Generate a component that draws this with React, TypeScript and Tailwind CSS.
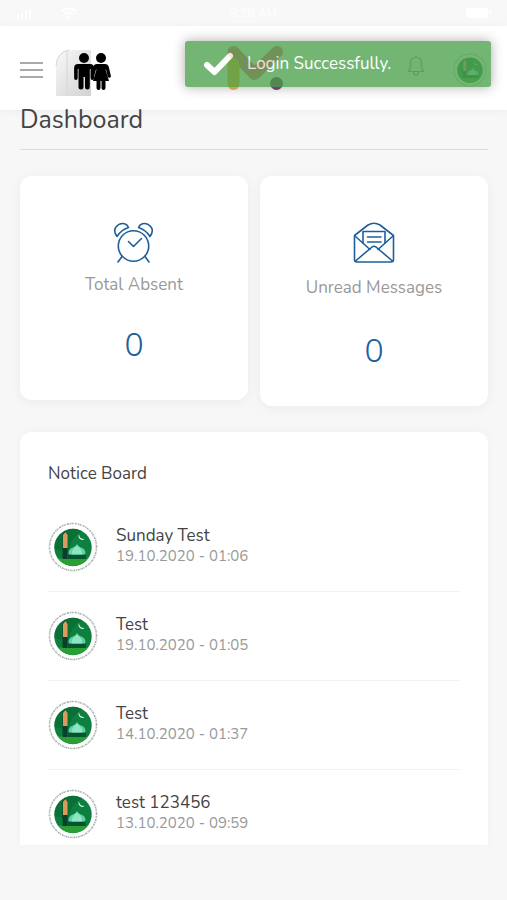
import type { ReactNode } from "react";

const BLUE = "#1f5f99";

const notices = [
  { id: 1, title: "Sunday Test", date: "19.10.2020 - 01:06" },
  { id: 2, title: "Test", date: "19.10.2020 - 01:05" },
  { id: 3, title: "Test", date: "14.10.2020 - 01:37" },
  { id: 4, title: "test 123456", date: "13.10.2020 - 09:59" },
];

function StatusBar() {
  return (
    <div className="grid h-[26px] grid-cols-3 items-center bg-[#f8f8f8] px-4 text-xs text-white">
      <svg width="64" height="14" viewBox="0 0 64 14" fill="none" stroke="#fff" strokeWidth="2" aria-hidden="true">
        <path d="M46 5.5c4-4 10-4 14 0M49 8.500c2.500-2.500 5.500-2.500 8 0" />
        <circle cx="53" cy="11" r="1.500" fill="#fff" stroke="none" />
        <path d="M2 12V9M6 12V7M10 12V5M14 12V3" />
      </svg>
      <span className="justify-self-center">9:28 AM</span>
      <svg width="25" height="10" viewBox="0 0 25 10" fill="#fff" className="justify-self-end" aria-hidden="true">
        <rect width="22" height="10" rx="3" />
        <rect x="23" y="3" width="2" height="4" rx="1" />
      </svg>
    </div>
  );
}

function PeopleLogo() {
  return (
    <svg width="56" height="48" viewBox="0 0 56 48" aria-hidden="true">
      <defs>
        <linearGradient id="page" x1="0" y1="0" x2="1" y2="1">
          <stop offset="0" stopColor="#f8f8f8" />
          <stop offset="1" stopColor="#d2d2d2" />
        </linearGradient>
      </defs>
      <path d="M1 47V15Q2 3 14 1H36V47Z" fill="url(#page)" />
      <path d="M1 17Q2 3 14 1M12 2V46" fill="none" stroke="#d6d6d6" />
      <circle cx="29" cy="9" r="5" />
      <path d="M23 15h12q4 0 4 4v10q0 2-1.700 2t-1.700-2v-9h-.8v18q0 2.500-2.400 2.500T30 38V28h-1.500v10q0 2.500-2.500 2.500T23.500 38V20h-.8v9q0 2-1.800 2t-1.800-2V19q0-4 4-4Z" />
      <circle cx="46" cy="9" r="5" />
      <path d="M42 15h8q3 0 3.800 3l2 8.500q.4 1.800-1 2.200t-2-1.200L51 20.500h-.5L54 32h-3.500v7q0 2-2 2t-2-2v-7h-1v7q0 2-2 2t-2-2v-7H38l3.500-11.500H41L39 27.500q-.5 1.500-2 1.200t-1-2.200l2-8.500q1-3 4-3Z" />
    </svg>
  );
}

function BrandLogo() {
  return (
    <svg width="58" height="46" viewBox="0 0 58 46" aria-hidden="true" fill="none" strokeLinecap="round" strokeLinejoin="round">
      <path d="M7.500 7L28.500 29L51 7" stroke="#f5506b" strokeWidth="12" />
      <path d="M7.500 19V39" stroke="#f2a81d" strokeWidth="12" />
      <circle cx="50.500" cy="38.500" r="6.500" fill="#5a1560" />
    </svg>
  );
}

function MosqueBadge({ className }: { className: string }) {
  return (
    <svg viewBox="0 0 50 50" className={className} aria-hidden="true">
      <circle cx="25" cy="25" r="25" fill="#fff" />
      <circle cx="25" cy="25" r="23.500" fill="none" stroke="#a3b3aa" strokeWidth="1.600" strokeDasharray="1.100 .7 1.600 .5 .6 .8 2 .9" />
      <circle cx="25" cy="25.500" r="18.700" fill="#0d7f3f" />
      <path d="M6.500 27A18.700 18.700 0 0 1 34 9.300Q22 16 20 30Z" fill="#08662f" opacity=".6" />
      <path d="M10 36.500H40A18.700 18.700 0 0 1 10 36.500Z" fill="#2a9f36" />
      <path d="M14.500 37V13l2.500-4 2.500 4V37Z" fill="#0b3f2c" />
      <path d="M15 26V13l2.300-3 2.300 3V26Z" fill="#dc9a5c" />
      <path d="M20 31H38V37H20Z" fill="#06532f" />
      <path d="M20.500 32.500Q20 27 25 25.500Q28 24.500 29 22Q30 24.500 33 25.500Q38 27 37.500 32.500Z" fill="#62d0a2" />
      <path d="M23.500 32.500Q24 27 29 23.500Q34 27 34.500 32.500Z" fill="#8ce6c3" />
      <path d="M31 12q0 5 5.500 5-2.200 1.800-4.500 0t-1-5Z" fill="#d9f5e3" />
    </svg>
  );
}

function BellIcon() {
  return (
    <svg width="18" height="22" viewBox="0 0 18 22" fill="none" stroke="#888" strokeWidth="1.200" strokeLinejoin="round" aria-hidden="true">
      <path d="M9 1v1.500M3.500 12V8q0-5.500 5.500-5.500T14.500 8v4q0 3 2.500 4.500H1Q3.500 15 3.500 12ZM6.500 17q.3 3 2.500 3t2.500-3" />
    </svg>
  );
}

function ClockIcon() {
  return (
    <svg width="42" height="42" viewBox="0 0 42 42" fill="none" stroke={BLUE} strokeWidth="1.600" strokeLinecap="round" strokeLinejoin="round" aria-hidden="true">
      <circle cx="20.500" cy="24" r="15.200" />
      <path d="M15.500 19.500L20.500 24.500L28.500 16.500M9 34.500L5 40M32 34.500L36 40" />
      <path d="M4 14.500Q0 9 3 5Q6.500 .5 11.500 1.700Q14.500 2.500 15.500 5.500Q8 8 4 14.500ZM37 14.500Q41 9 38 5Q34.500 .5 29.500 1.700Q26.500 2.500 25.500 5.500Q33 8 37 14.500Z" />
    </svg>
  );
}

function EnvelopeIcon() {
  return (
    <svg width="42" height="42" viewBox="0 0 42 42" fill="none" stroke={BLUE} strokeWidth="1.600" strokeLinecap="round" strokeLinejoin="round" aria-hidden="true">
      <path d="M1.500 13.500L15 3Q21 -.5 27 3L40.500 13.500V37.500Q40.500 40 38 40H4Q1.500 40 1.500 37.500Z" />
      <path d="M2 14L17 27.500M40 14L25 27.500M2.500 39L19 25Q21 23.500 23 25L39.500 39" />
      <path d="M10 21V9.500H32V21M14.500 15H28M14.500 20H28" />
    </svg>
  );
}

function StatCard({ icon, label, value, className }: { icon: ReactNode; label: string; value: number; className: string }) {
  return (
    <section className={`flex flex-col items-center rounded-xl bg-white pt-[46px] pb-[34px] shadow-[0_2px_12px_rgba(0,0,0,0.05)] ${className}`}>
      {icon}
      <h2 className="text-[17px] leading-6 text-[#999]">{label}</h2>
      <p className="mt-5 text-[32px] leading-10 font-light text-[#1f5f99]">{value}</p>
    </section>
  );
}

function Toast() {
  return (
    <div role="status" className="absolute top-[41px] right-4 flex h-[46px] w-[306px] items-center rounded-[3px] bg-[#51a351] pl-[18px] text-[17px] text-white opacity-80 shadow-[0_0_12px_#999]">
      <svg width="32" height="26" viewBox="0 0 32 26" fill="none" stroke="#fff" strokeWidth="6" strokeLinecap="round" strokeLinejoin="round" aria-hidden="true">
        <path d="M4 14L11.500 21L27 5" />
      </svg>
      <span className="ml-3">Login Successfully.</span>
    </div>
  );
}

export default function App() {
  return (
    <div className="relative min-h-screen bg-[#f7f7f7] pb-14 font-['Nunito','Open_Sans',sans-serif] text-[#444]">
      <StatusBar />

      <header className="grid h-[84px] grid-cols-3 items-center bg-white px-5 shadow-[0_1px_8px_rgba(0,0,0,0.05)]">
        <div className="flex items-center gap-3 pt-1">
          <button type="button" aria-label="Open menu" className="flex w-[23px] flex-col gap-[5px] py-2">
            <span className="h-0.5 w-full bg-[#aaa]" />
            <span className="h-0.5 w-full bg-[#aaa]" />
            <span className="h-0.5 w-full bg-[#aaa]" />
          </button>
          <div className="pt-1.5">
            <PeopleLogo />
          </div>
        </div>
        <a href="#home" aria-label="Home" className="ml-1 justify-self-center">
          <BrandLogo />
        </a>
        <div className="flex items-center justify-end gap-7 pt-1">
          <button type="button" aria-label="Notifications" className="pb-2">
            <BellIcon />
          </button>
          <button type="button" aria-label="Profile">
            <MosqueBadge className="size-[34px]" />
          </button>
        </div>
      </header>

      <main className="pr-[19px] pl-5">
        <h1 className="border-b border-[#ddd] pb-[18px] text-[25px] leading-[21px]">Dashboard</h1>

        <div className="mt-[26px] grid grid-cols-2 items-start gap-3">
          <StatCard icon={<ClockIcon />} label="Total Absent" value={0} className="gap-[9px]" />
          <StatCard icon={<EnvelopeIcon />} label="Unread Messages" value={0} className="gap-3" />
        </div>

        <section className="mt-[26px] rounded-t-xl bg-white px-7 pt-[30px] pb-1.5 shadow-[0_-1px_10px_rgba(0,0,0,0.03)]">
          <h2 className="text-[17px] leading-6">Notice Board</h2>
          <ul className="mt-[17px] divide-y divide-[#f2f2f2]">
            {notices.map((notice) => (
              <li key={notice.id} className="flex items-center gap-[18px] py-[19px] last:pb-0">
                <MosqueBadge className="size-[50px] shrink-0" />
                <div className="pb-0.5">
                  <h3 className="text-[17px] leading-5">{notice.title}</h3>
                  <p className="text-[15px] leading-5 text-[#999]">{notice.date}</p>
                </div>
              </li>
            ))}
          </ul>
        </section>
      </main>

      <Toast />
    </div>
  );
}
